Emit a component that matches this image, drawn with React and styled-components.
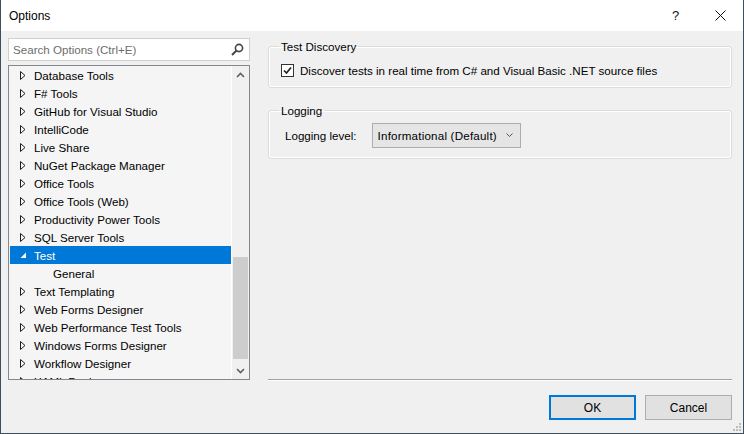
import styled, { createGlobalStyle } from "styled-components";

const GlobalStyle = createGlobalStyle`
    html, body {
        margin: 0;
        padding: 0;
        background: #f0f0f0;
    }
    body {
        font-family: "Liberation Sans", Arial, sans-serif;
        font-size: 11.6px;
        color: #000;
    }
`;

const Window = styled.div`
    position: relative;
    width: 744px;
    height: 434px;
    box-sizing: border-box;
    display: flex;
    flex-direction: column;
    border: 1px solid #3e4f60;
    border-top: none;
    background: #f0f0f0;
    overflow: hidden;
`;

const TitleBar = styled.div`
    height: 31px;
    flex-shrink: 0;
    background: #fff;
    display: flex;
    align-items: center;
    padding-left: 8px;
`;

const Title = styled.div`
    flex: 1;
    font-size: 12px;
    padding-top: 1px;
`;

const TitleButton = styled.div`
    width: 45px;
    height: 31px;
    display: flex;
    align-items: center;
    justify-content: center;
    font-size: 13px;
    color: #111;
`;

const Body = styled.div`
    flex: 1;
    display: flex;
    flex-direction: column;
    padding: 7px 11px 0 7px;
`;

const Main = styled.div`
    display: flex;
    gap: 18px;
`;

const LeftCol = styled.div`
    width: 242px;
    display: flex;
    flex-direction: column;
    gap: 4px;
`;

const Search = styled.div`
    height: 23px;
    box-sizing: border-box;
    border: 1px solid #cfcfcf;
    background: #fff;
    display: flex;
    align-items: center;
    padding: 0 5px 0 4px;
    color: #6d6d6d;
`;

const SearchText = styled.div`
    flex: 1;
`;

const Tree = styled.div`
    height: 315px;
    box-sizing: border-box;
    border: 1px solid #828790;
    background: #f5f5f5;
    display: flex;
    overflow: hidden;
`;

const Rows = styled.div`
    flex: 1;
    padding: 0 0 0 1px;
    overflow: hidden;
`;

const Row = styled.div`
    height: 18px;
    display: flex;
    align-items: center;
    padding-left: ${(p) => (p.child ? "43px" : "10px")};
    background: ${(p) => (p.selected ? "#0078d7" : "transparent")};
    color: ${(p) => (p.selected ? "#fff" : "#000")};
    white-space: nowrap;
`;

const Arrow = styled.span`
    width: 7px;
    display: flex;
    align-items: center;
    margin-right: 7px;
`;

const ScrollBar = styled.div`
    width: 17px;
    border-left: 1px solid #fff;
    background: #f0f0f0;
    display: flex;
    flex-direction: column;
    align-items: center;
`;

const ScrollArrow = styled.div`
    height: 17px;
    display: flex;
    align-items: center;
    justify-content: center;
    width: 100%;
`;

const ScrollTrack = styled.div`
    flex: 1;
    width: 100%;
    display: flex;
    flex-direction: column;
    justify-content: flex-end;
    padding-bottom: 3px;
`;

const Thumb = styled.div`
    height: 102px;
    margin: 0 1px;
    background: #cdcdcd;
`;

const RightCol = styled.div`
    flex: 1;
    display: flex;
    flex-direction: column;
`;

const Group = styled.fieldset`
    margin: ${(p) => p.m};
    padding: ${(p) => p.pad};
    border: 1px solid #dcdcdc;
    border-radius: 3px;
    box-shadow: inset 0 0 0 1px #fff;
    height: ${(p) => p.h};
    box-sizing: border-box;

    legend {
        padding: 0 2px;
        margin-left: -2px;
        font-size: 11.6px;
    }
`;

const CheckRow = styled.label`
    display: flex;
    align-items: center;
    gap: 6px;
`;

const Check = styled.span`
    width: 13px;
    height: 13px;
    box-sizing: border-box;
    border: 1px solid #333;
    background: #fff;
    display: flex;
    align-items: center;
    justify-content: center;
`;

const FieldRow = styled.div`
    display: flex;
    align-items: center;
    gap: 15px;
    padding-left: 4px;
`;

const Combo = styled.div`
    width: 149px;
    height: 25px;
    box-sizing: border-box;
    border: 1px solid #adadad;
    background: #e5e5e5;
    display: flex;
    align-items: center;
    padding: 0 7px 0 5px;
    justify-content: space-between;
    letter-spacing: 0.2px;
`;

const Spacer = styled.div`
    flex: 1;
`;

const Separator = styled.div`
    height: 1px;
    background: #a0a0a0;
    border-bottom: 1px solid #fff;
    margin-bottom: -1px;
`;

const Footer = styled.div`
    display: flex;
    justify-content: flex-end;
    gap: 9px;
    padding-top: 15px;
`;

const Button = styled.button`
    width: 87px;
    height: 25px;
    box-sizing: border-box;
    font-family: inherit;
    font-size: 12px;
    color: #000;
    background: #e1e1e1;
    border: ${(p) => (p.primary ? "2px solid #0078d7" : "1px solid #adadad")};
    padding: 0;
`;

const Grip = styled.svg`
    position: absolute;
    right: 2px;
    bottom: 2px;
`;

const Collapsed = () => (
    <svg width="6" height="9" viewBox="0 0 6 9">
        <path d="M0.5 0.5 L5 4.5 L0.5 8.5 Z" fill="none" stroke="#1e1e1e" strokeWidth="1" />
    </svg>
);

const Expanded = () => (
    <svg width="7" height="7" viewBox="0 0 7 7">
        <path d="M6 0.5 L6 6 L0.5 6 Z" fill="#fff" />
    </svg>
);

const items = [
    "Database Tools",
    "F# Tools",
    "GitHub for Visual Studio",
    "IntelliCode",
    "Live Share",
    "NuGet Package Manager",
    "Office Tools",
    "Office Tools (Web)",
    "Productivity Power Tools",
    "SQL Server Tools",
    { name: "Test", open: true },
    { name: "General", child: true },
    "Text Templating",
    "Web Forms Designer",
    "Web Performance Test Tools",
    "Windows Forms Designer",
    "Workflow Designer",
    "XAML Designer",
];

const App = () => {
    return (
        <>
            <GlobalStyle />
            <Window>
                <TitleBar>
                    <Title>Options</Title>
                    <TitleButton>?</TitleButton>
                    <TitleButton>
                        <svg width="11" height="11" viewBox="0 0 11 11">
                            <path d="M0.5 0.5 L10.5 10.5 M10.5 0.5 L0.5 10.5" stroke="#111" strokeWidth="1" />
                        </svg>
                    </TitleButton>
                </TitleBar>
                <Body>
                    <Main>
                        <LeftCol>
                            <Search>
                                <SearchText>Search Options (Ctrl+E)</SearchText>
                                <svg width="13" height="13" viewBox="0 0 13 13">
                                    <circle cx="8" cy="5" r="3.6" fill="none" stroke="#444" strokeWidth="1.6" />
                                    <path d="M5.5 7.5 L1 12" stroke="#444" strokeWidth="2" />
                                </svg>
                            </Search>
                            <Tree>
                                <Rows>
                                    {items.map((item, i) => {
                                        const it = typeof item === "string" ? { name: item } : item;
                                        return (
                                            <Row key={i} selected={it.open} child={it.child}>
                                                {!it.child && (
                                                    <Arrow>{it.open ? <Expanded /> : <Collapsed />}</Arrow>
                                                )}
                                                {it.name}
                                            </Row>
                                        );
                                    })}
                                </Rows>
                                <ScrollBar>
                                    <ScrollArrow>
                                        <svg width="9" height="6" viewBox="0 0 9 6">
                                            <path d="M1 5 L4.5 1.5 L8 5" fill="none" stroke="#606060" strokeWidth="1.6" />
                                        </svg>
                                    </ScrollArrow>
                                    <ScrollTrack>
                                        <Thumb />
                                    </ScrollTrack>
                                    <ScrollArrow>
                                        <svg width="9" height="6" viewBox="0 0 9 6">
                                            <path d="M1 1 L4.5 4.5 L8 1" fill="none" stroke="#606060" strokeWidth="1.6" />
                                        </svg>
                                    </ScrollArrow>
                                </ScrollBar>
                            </Tree>
                        </LeftCol>
                        <RightCol>
                            <Group h="48px" m="2px 0 16px 0" pad="11px 8px 0 12px">
                                <legend>Test Discovery</legend>
                                <CheckRow>
                                    <Check>
                                        <svg width="9" height="9" viewBox="0 0 9 9">
                                            <path d="M1 4.5 L3.5 7 L8 1.5" fill="none" stroke="#222" strokeWidth="1.7" />
                                        </svg>
                                    </Check>
                                    Discover tests in real time from C# and Visual Basic .NET source files
                                </CheckRow>
                            </Group>
                            <Group h="55px" m="0" pad="6px 8px 0 12px">
                                <legend>Logging</legend>
                                <FieldRow>
                                    <span>Logging level:</span>
                                    <Combo>
                                        <span>Informational (Default)</span>
                                        <svg width="7" height="5" viewBox="0 0 7 5">
                                            <path d="M0.5 0.5 L3.5 3.5 L6.5 0.5" fill="none" stroke="#555" strokeWidth="1" />
                                        </svg>
                                    </Combo>
                                </FieldRow>
                            </Group>
                            <Spacer />
                            <Separator />
                        </RightCol>
                    </Main>
                    <Footer>
                        <Button primary>OK</Button>
                        <Button>Cancel</Button>
                    </Footer>
                </Body>
                <Grip width="8" height="8" viewBox="0 0 8 8">
                    <rect x="6" y="0" width="2" height="2" fill="#bbb" />
                    <rect x="3" y="3" width="2" height="2" fill="#bbb" />
                    <rect x="6" y="3" width="2" height="2" fill="#bbb" />
                    <rect x="0" y="6" width="2" height="2" fill="#bbb" />
                    <rect x="3" y="6" width="2" height="2" fill="#bbb" />
                    <rect x="6" y="6" width="2" height="2" fill="#bbb" />
                </Grip>
            </Window>
        </>
    );
};

export default App;
